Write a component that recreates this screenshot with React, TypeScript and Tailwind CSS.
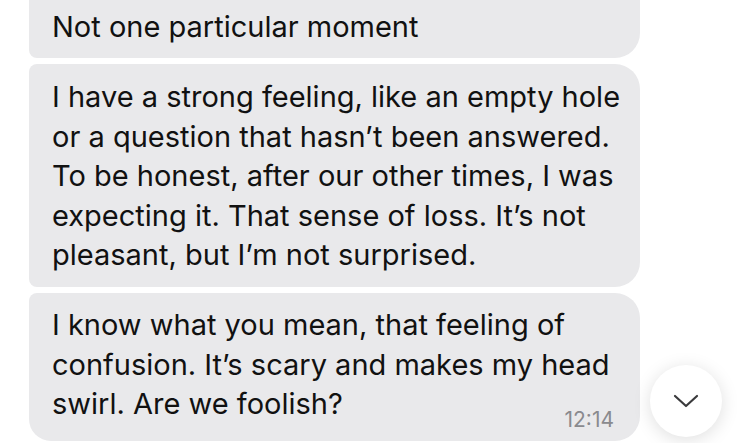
const Bubble = ({
  lines,
  className,
}: {
  lines: string[];
  className: string;
}) => {
  return (
    <div
      className={`w-[611px] bg-[#e9e9eb] pl-[23px] pr-[20px] text-[29px] leading-[39.4px] text-[#111] ${className}`}
    >
      {lines.map((l, i) => (
        <p key={i} className="whitespace-nowrap">
          {l}
        </p>
      ))}
    </div>
  );
};

export default function App() {
  return (
    <div
      className="relative h-[443px] w-[749px] overflow-hidden bg-white"
      style={{ fontFamily: "Inter, 'Liberation Sans', sans-serif" }}
    >
      <div className="flex flex-col gap-[6px] pl-[29px]">
        <Bubble
          lines={["Not one particular moment"]}
          className="rounded-bl-[8px] rounded-br-[25px] pt-[7px] pb-[12px]"
        />
        <Bubble
          lines={[
            "I have a strong feeling, like an empty hole",
            "or a question that hasn\u2019t been answered.",
            "To be honest, after our other times, I was",
            "expecting it. That sense of loss. It\u2019s not",
            "pleasant, but I\u2019m not surprised.",
          ]}
          className="rounded-l-[8px] rounded-r-[25px] py-[13px]"
        />
        <div className="w-[611px] rounded-tl-[8px] rounded-bl-[22px] rounded-r-[25px] bg-[#e9e9eb] pt-[12px] pb-[17px] pl-[23px] pr-[26px] text-[29px] leading-[39.4px] text-[#111]">
          <p className="whitespace-nowrap">I know what you mean, that feeling of</p>
          <p className="whitespace-nowrap">confusion. It&rsquo;s scary and makes my head</p>
          <div className="flex items-end justify-between">
            <p className="whitespace-nowrap">swirl. Are we foolish?</p>
            <span className="translate-y-[8px] text-[21px] leading-[24px] text-[#8a8a8e]">
              12:14
            </span>
          </div>
        </div>
      </div>

      {/* scroll to bottom */}
      <button className="absolute left-[650px] top-[365px] flex h-[72px] w-[72px] items-center justify-center rounded-full bg-white shadow-[0_3px_18px_rgba(0,0,0,0.13)]">
        <svg width="26" height="14" viewBox="0 0 26 14" fill="none">
          <path
            d="M2 2 L13 12 L24 2"
            stroke="#3a3a3c"
            strokeWidth="2.2"
            strokeLinecap="round"
            strokeLinejoin="round"
          />
        </svg>
      </button>
    </div>
  );
}
